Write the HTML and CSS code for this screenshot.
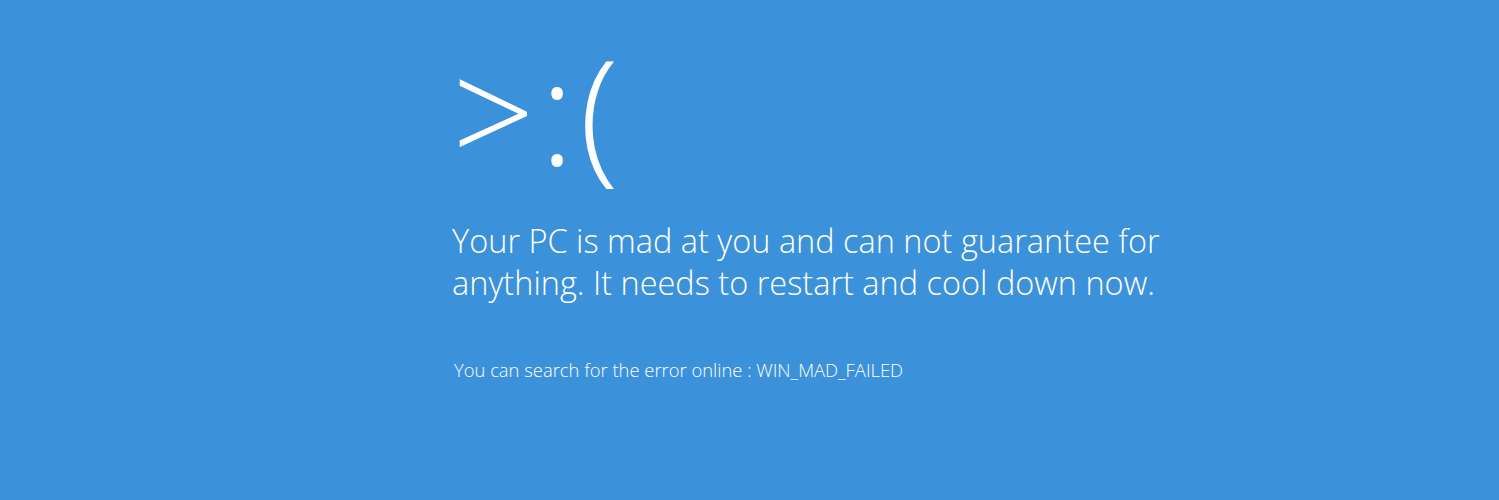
FILE: index.html
```html
<!DOCTYPE html>
<html lang="en">
<head>
<meta charset="utf-8">
<title>Your PC is mad</title>
<link rel="stylesheet" href="styles.css">
</head>
<body>
<main class="screen">
  <div class="content">
    <div class="face">&gt;:(</div>
    <p class="message">Your PC is mad at you and can not guarantee for<br>anything. It needs to restart and cool down now.</p>
    <p class="detail">You can search for the error online : WIN_MAD_FAILED</p>
  </div>
</main>
</body>
</html>
```
FILE: styles.css
```css
html, body {
  margin: 0;
  padding: 0;
  background: #3c92da;
}
.screen {
  width: 100%;
  height: 500px;
  background: #3c92da;
  color: #ffffff;
  font-family: "Open Sans", "Noto Sans", sans-serif;
  font-weight: 300;
}
.content {
  padding: 35px 0 0 452px;
  display: flex;
  flex-direction: column;
}
.face {
  font-size: 145px;
  line-height: 150px;
  letter-spacing: 5px;
}
.message {
  margin: 35px 0 0 0;
  font-size: 32.5px;
  line-height: 42px;
}
.detail {
  margin: 54px 0 0 2px;
  font-size: 18.4px;
  line-height: 24px;
}
```
